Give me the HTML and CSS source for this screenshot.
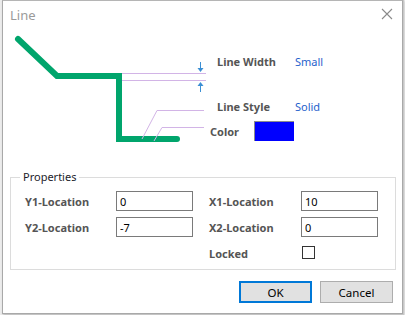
FILE: index.html
```html
<!DOCTYPE html>
<html lang="en">
<head>
    <meta charset="UTF-8">
    <title>Line</title>
    <link rel="stylesheet" href="styles.css">
</head>
<body>

<div class="dialog">
    <div class="titlebar">
        <span class="title">Line</span>
        <svg class="close" width="12" height="12" viewBox="0 0 12 12">
            <path d="M1 1 L11 11 M11 1 L1 11" stroke="#8a8a8a" stroke-width="1.1" fill="none"/>
        </svg>
    </div>

    <div class="preview">
        <!-- sketch of the line with its callouts -->
        <svg class="sketch" width="205" height="141" viewBox="0 0 205 141">
            <polyline points="15,11 54,48 116,48 116,111 174,111" fill="none" stroke="#00a56c" stroke-width="6" stroke-linecap="round" stroke-linejoin="miter"/>
            <g stroke="#d2b4e6" stroke-width="1" fill="none">
                <line x1="119" y1="45.5" x2="203" y2="45.5"/>
                <line x1="119" y1="52.5" x2="203" y2="52.5"/>
                <polyline points="139,111 154,82.5 201,82.5"/>
                <polyline points="151,113 159,99.5 201,99.5"/>
            </g>
            <g stroke="#3b8fd4" stroke-width="1" fill="#3b8fd4">
                <line x1="197.5" y1="34" x2="197.5" y2="41"/>
                <path d="M194.5 40 L200.5 40 L197.5 44 Z" stroke="none"/>
                <line x1="197.5" y1="57" x2="197.5" y2="64"/>
                <path d="M194.5 58 L200.5 58 L197.5 54 Z" stroke="none"/>
            </g>
        </svg>

        <div class="legend-list">
            <div class="legend-row first">
                <span class="legend-label">Line Width</span>
                <span class="legend-value">Small</span>
            </div>
            <div class="legend-row second">
                <span class="legend-label">Line Style</span>
                <span class="legend-value">Solid</span>
            </div>
            <div class="color-row">
                <span class="legend-label">Color</span>
                <span class="swatch"></span>
            </div>
        </div>
    </div>

    <fieldset class="group">
        <legend>Properties</legend>
        <div class="fields">
            <label>Y1-Location</label>
            <input type="text" value="0">
            <label class="right">X1-Location</label>
            <input type="text" value="10">

            <label>Y2-Location</label>
            <input type="text" value="-7">
            <label class="right">X2-Location</label>
            <input type="text" value="0">

            <span></span>
            <span></span>
            <label class="right locked">Locked</label>
            <span class="check"></span>
        </div>
    </fieldset>

    <div class="buttons">
        <button class="btn default">OK</button>
        <button class="btn">Cancel</button>
    </div>
</div>

<div class="backdrop">
    <div class="backdrop-blue"></div>
</div>

</body>
</html>
```

FILE: styles.css
```css
body {
    margin: 0;
    padding: 0;
    background-color: #ececec;
    font-family: "Noto Sans", "Open Sans", sans-serif;
    font-size: 12px;
    display: flex;
    width: 405px;
    height: 315px;
    overflow: hidden;
}
.dialog {
    margin-left: 2px;
    width: 399px;
    height: 312px;
    border: 1px solid #a9a9a9;
    border-top-color: #b5b5b5;
    background-color: white;
    box-shadow: 1px 1px 2px rgba(0, 0, 0, 0.25);
    display: flex;
    flex-direction: column;
    flex-shrink: 0;
}
.titlebar {
    height: 27px;
    display: flex;
    align-items: center;
    justify-content: space-between;
    padding: 0 9px 0 7px;
}
.title {
    color: #9a9a9a;
    font-size: 13px;
}
.close {
    margin-top: -1px;
}
.preview {
    display: flex;
    height: 141px;
}
.sketch {
    flex-shrink: 0;
}
.legend-list {
    display: flex;
    flex-direction: column;
    padding-top: 26px;
    padding-left: 9px;
}
.legend-row {
    display: flex;
    line-height: 16px;
    height: 16px;
}
.legend-row.second {
    margin-top: 29px;
}
.legend-label {
    color: #555;
    font-weight: bold;
    font-size: 11px;
}
.legend-row .legend-label {
    width: 78px;
}
.legend-value {
    color: #1f62cc;
    font-size: 11px;
}
.color-row {
    display: flex;
    align-items: center;
    margin-top: 6px;
    margin-left: -7px;
    height: 20px;
}
.color-row .legend-label {
    width: 44px;
}
.swatch {
    width: 39px;
    height: 19px;
    background-color: #0000ff;
    border-top: 1px solid #8c8c8c;
    border-left: 1px solid #8c8c8c;
}
.group {
    margin: 0 6px 0 7px;
    padding: 0 0 6px 14px;
    border: 1px solid #dcdcdc;
}
.group legend {
    margin-left: -5px;
    padding: 0 3px;
    color: #1c1c2a;
    font-size: 11px;
    line-height: 16px;
}
.fields {
    display: grid;
    grid-template-columns: 91px 77px 108px 77px;
    row-gap: 6px;
    padding-top: 6px;
}
.fields label {
    color: #555;
    font-weight: bold;
    font-size: 11px;
    display: flex;
    align-items: center;
}
.fields label.right {
    padding-left: 16px;
}
.fields input {
    box-sizing: border-box;
    width: 77px;
    height: 20px;
    border: 1px solid #7a7a7a;
    padding: 0 3px;
    font-family: "Noto Sans", sans-serif;
    font-size: 11px;
    color: black;
    outline: none;
}
.fields .locked {
    height: 20px;
    margin-top: 0;
}
.check {
    width: 11px;
    height: 11px;
    border: 1px solid #333;
    margin: 3px 0 0 1px;
}
.buttons {
    display: flex;
    justify-content: flex-end;
    gap: 8px;
    padding: 11px 9px 0 0;
}
.btn {
    box-sizing: border-box;
    width: 73px;
    height: 22px;
    background-color: #e1e1e1;
    border: 1px solid #adadad;
    font-family: "Noto Sans", sans-serif;
    font-size: 11.5px;
    color: black;
    padding: 0;
}
.btn.default {
    border: 2px solid #0078d7;
}
.backdrop {
    flex: 1;
    padding-top: 33px;
    border-left: 1px solid #c8c8c8;
}
.backdrop-blue {
    width: 3px;
    height: 25px;
    background-color: #0000cc;
    margin-left: 1px;
}
```
